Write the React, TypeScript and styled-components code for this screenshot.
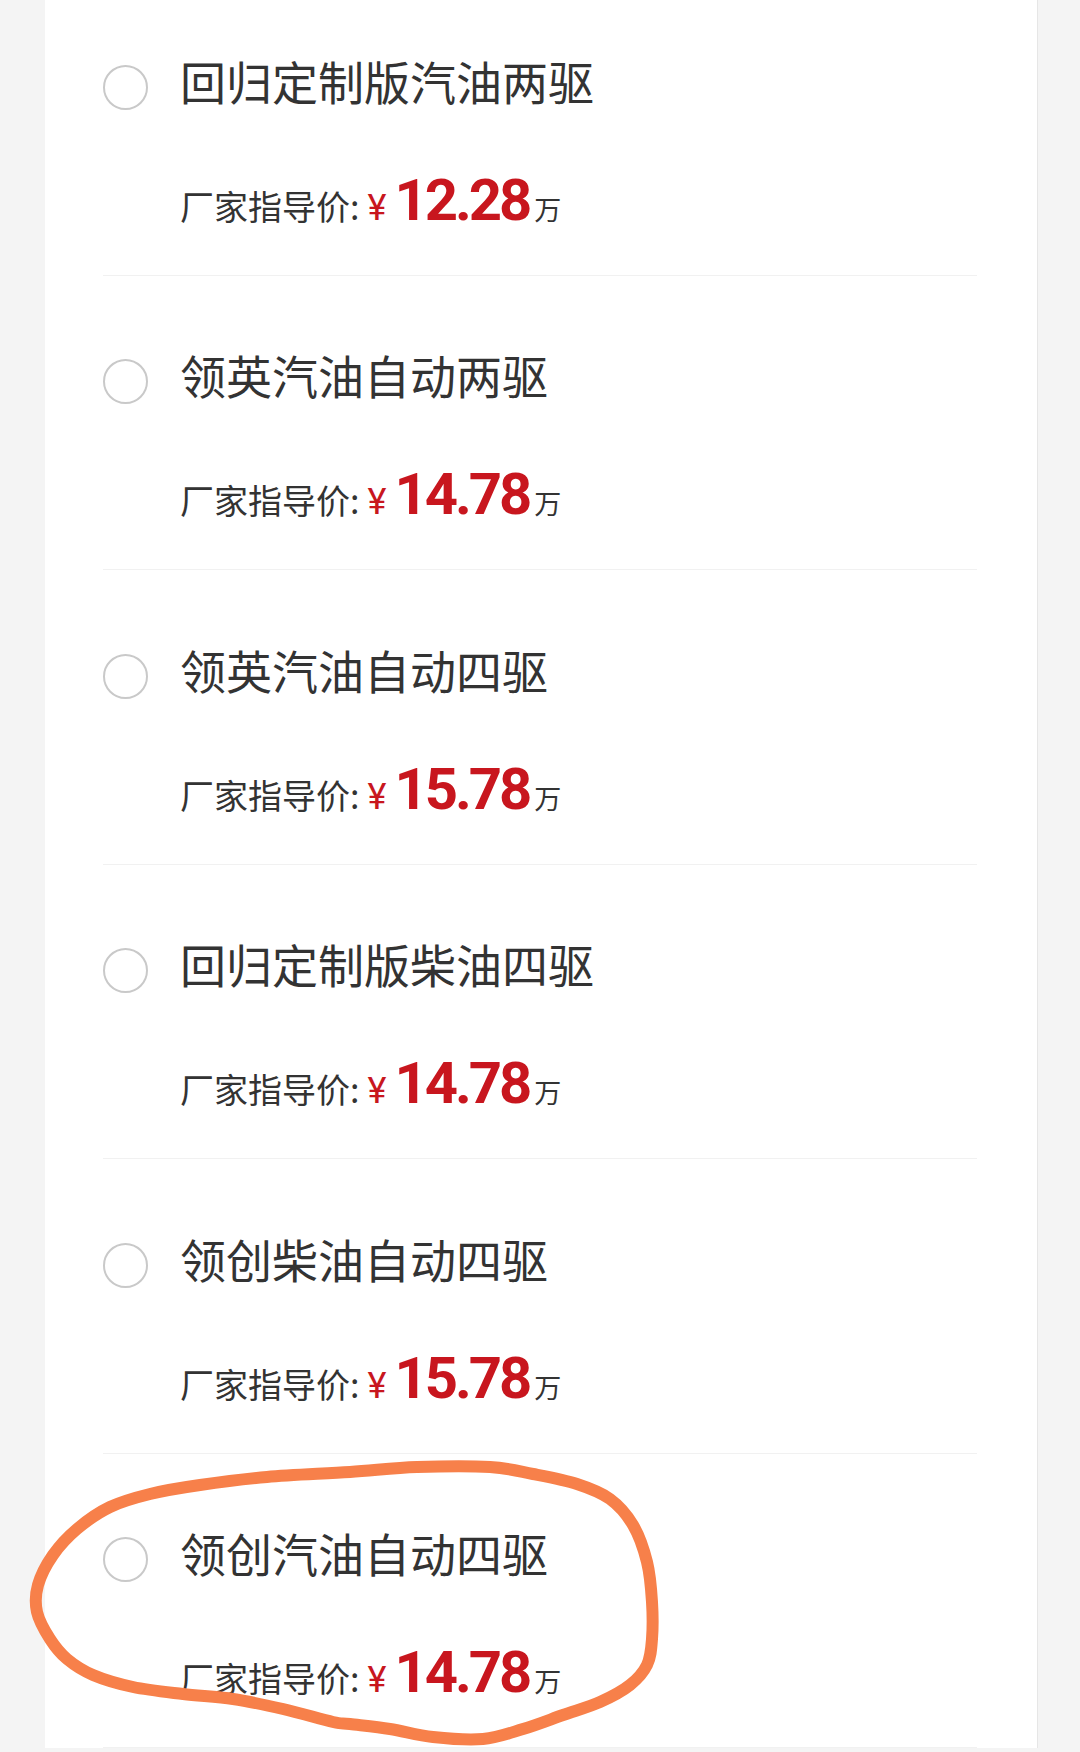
import styled, { createGlobalStyle } from "styled-components";

const GlobalStyle = createGlobalStyle`
  html, body {
    margin: 0;
    padding: 0;
    background: #f4f4f4;
  }
  body {
    font-family: "Noto Sans CJK SC", "Noto Sans", sans-serif;
  }
`;

const Page = styled.div`
  position: relative;
  width: 1080px;
  height: 1752px;
  overflow: hidden;
  background: #f4f4f4;
`;

const Card = styled.div`
  margin: -18.7px 0 0 45px;
  width: 993px;
  box-sizing: border-box;
  background: #fff;
  border-right: 1px solid #e6e6e6;
  padding: 0 60px 0 58px;
`;

const Row = styled.div`
  height: 294.5px;
  box-sizing: border-box;
  border-bottom: 1px solid #f1f1f1;
  padding-top: 83.5px;
`;

const Header = styled.label`
  display: flex;
  align-items: center;
  height: 45px;
  gap: 32px;
`;

const Radio = styled.span`
  flex: none;
  width: 45px;
  height: 45px;
  box-sizing: border-box;
  border-radius: 50%;
  border: 2px solid #c9c9c9;
  background: #fff;
`;

const Title = styled.span`
  font-size: 46px;
  line-height: 45px;
  padding-bottom: 14px;
  color: #333;
  white-space: nowrap;
`;

const PriceLine = styled.div`
  display: flex;
  align-items: baseline;
  height: 58px;
  margin: 61px 0 0 77px;
`;

const Label = styled.span`
  font-size: 34px;
  line-height: 34px;
  color: #333;
`;

const Yen = styled.span`
  font-family: Roboto, "Liberation Sans", sans-serif;
  font-size: 36px;
  line-height: 36px;
  color: #c8161e;
  margin: 0 8px 0 8px;
`;

const Amount = styled.span`
  font-family: Roboto, "Liberation Sans", sans-serif;
  font-weight: 700;
  font-size: 58px;
  line-height: 58px;
  letter-spacing: -3px;
  color: #c8161e;
`;

const Unit = styled.span`
  font-size: 27px;
  line-height: 27px;
  color: #333;
  margin-left: 5px;
`;

const Annotation = styled.svg`
  position: absolute;
  left: 0;
  top: 0;
  width: 1080px;
  height: 1752px;
  pointer-events: none;
`;

const trims = [
  { name: "回归定制版汽油两驱", price: "12.28" },
  { name: "领英汽油自动两驱", price: "14.78" },
  { name: "领英汽油自动四驱", price: "15.78" },
  { name: "回归定制版柴油四驱", price: "14.78" },
  { name: "领创柴油自动四驱", price: "15.78" },
  { name: "领创汽油自动四驱", price: "14.78" },
];

// hand-drawn loop round the last trim
const loop: [number, number][] = [
  [350, 1472], [417, 1467], [490, 1467], [533, 1474], [577, 1484],
  [610, 1499], [633, 1525], [647, 1562], [652, 1602], [652, 1639],
  [647, 1665], [630, 1685], [600, 1702], [563, 1715], [523, 1729],
  [483, 1739], [433, 1737], [390, 1729], [350, 1724], [333, 1722],
  [283, 1709], [233, 1699], [183, 1694], [133, 1687], [93, 1675],
  [67, 1659], [50, 1639], [37, 1612], [38, 1585], [53, 1555],
  [77, 1529], [110, 1507], [150, 1494], [200, 1485], [267, 1477],
];

function smoothClosed(pts: [number, number][]) {
  const n = pts.length;
  let d = `M${pts[0][0]} ${pts[0][1]}`;
  for (let i = 0; i < n; i++) {
    const p0 = pts[(i - 1 + n) % n];
    const p1 = pts[i];
    const p2 = pts[(i + 1) % n];
    const p3 = pts[(i + 2) % n];
    const c1x = p1[0] + (p2[0] - p0[0]) / 6;
    const c1y = p1[1] + (p2[1] - p0[1]) / 6;
    const c2x = p2[0] - (p3[0] - p1[0]) / 6;
    const c2y = p2[1] - (p3[1] - p1[1]) / 6;
    d += ` C${c1x.toFixed(1)} ${c1y.toFixed(1)} ${c2x.toFixed(1)} ${c2y.toFixed(1)} ${p2[0]} ${p2[1]}`;
  }
  return d;
}

export default function App() {
  return (
    <Page>
      <GlobalStyle />
      <Card>
        {trims.map((t) => (
          <Row key={t.name}>
            <Header>
              <Radio />
              <Title>{t.name}</Title>
            </Header>
            <PriceLine>
              <Label>厂家指导价:</Label>
              <Yen>¥</Yen>
              <Amount>{t.price}</Amount>
              <Unit>万</Unit>
            </PriceLine>
          </Row>
        ))}
      </Card>
      <Annotation viewBox="0 0 1080 1752">
        <path
          d={smoothClosed(loop)}
          fill="none"
          stroke="#f7804a"
          strokeWidth={12}
          strokeLinecap="round"
          strokeLinejoin="round"
        />
      </Annotation>
    </Page>
  );
}
